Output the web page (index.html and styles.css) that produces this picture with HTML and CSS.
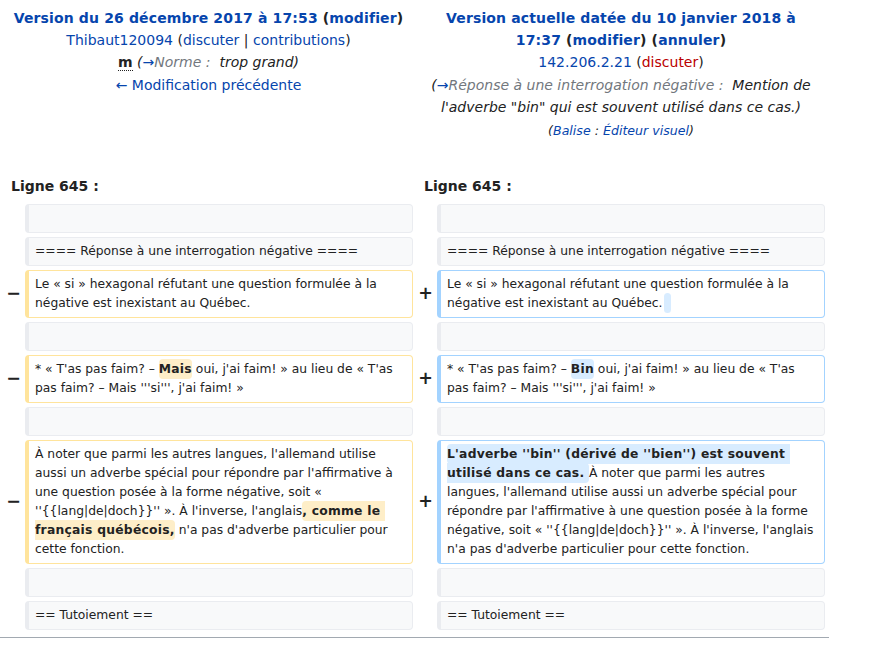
FILE: index.html
```html
<!DOCTYPE html>
<html lang="fr">
<head>
<meta charset="utf-8">
<title>Différences entre les versions</title>
<link rel="stylesheet" href="styles.css">
</head>
<body>
<div class="page">
<table class="diff">
  <colgroup>
    <col class="c-mark1"><col class="c-content"><col class="c-mark2"><col class="c-content">
  </colgroup>
  <tbody>
    <tr class="diff-title">
      <td colspan="2" class="diff-otitle">
        <div><strong><a class="lnk" href="#">Version du 26 décembre 2017 à 17:53</a> <span class="paren">(<a class="lnk" href="#">modifier</a>)</span></strong></div>
        <div><a class="lnk" href="#">Thibaut120094</a> <span class="paren">(<a class="lnk" href="#">discuter</a> | <a class="lnk" href="#">contributions</a>)</span></div>
        <div><abbr class="minoredit">m</abbr> <span class="comment">(<a class="lnk" href="#">→</a><span class="autocomment">Norme&nbsp;:&nbsp;</span> trop grand)</span></div>
        <div><a class="lnk" href="#">← Modification précédente</a></div>
      </td>
      <td colspan="2" class="diff-ntitle">
        <div><strong><a class="lnk" href="#">Version actuelle datée du 10 janvier 2018 à 17:37</a> <span class="paren">(<a class="lnk" href="#">modifier</a>)</span> <span class="paren">(<a class="lnk" href="#">annuler</a>)</span></strong></div>
        <div><a class="lnk" href="#">142.206.2.21</a> <span class="paren">(<a class="newlnk" href="#">discuter</a>)</span></div>
        <div><span class="comment">(<a class="lnk" href="#">→</a><span class="autocomment">Réponse à une interrogation négative&nbsp;:&nbsp;</span> Mention de l'adverbe "bin" qui est souvent utilisé dans ce cas.)</span></div>
        <div><span class="tags">(<a class="lnk" href="#">Balise</a> : <a class="lnk" href="#">Éditeur visuel</a>)</span></div>
      </td>
    </tr>
    <tr>
      <td colspan="2" class="diff-lineno">Ligne 645 :</td>
      <td colspan="2" class="diff-lineno">Ligne 645 :</td>
    </tr>
    <tr>
      <td class="diff-marker"></td><td class="diff-context"><div><br></div></td>
      <td class="diff-marker"></td><td class="diff-context"><div><br></div></td>
    </tr>
    <tr>
      <td class="diff-marker"></td><td class="diff-context"><div>==== Réponse à une interrogation négative ====</div></td>
      <td class="diff-marker"></td><td class="diff-context"><div>==== Réponse à une interrogation négative ====</div></td>
    </tr>
    <tr>
      <td class="diff-marker">−</td><td class="diff-deletedline"><div>Le « si » hexagonal réfutant une question formulée à la négative est inexistant au Québec.</div></td>
      <td class="diff-marker">+</td><td class="diff-addedline"><div>Le « si » hexagonal réfutant une question formulée à la négative est inexistant au Québec.<ins class="diffchange diffchange-space">&nbsp;</ins></div></td>
    </tr>
    <tr>
      <td class="diff-marker"></td><td class="diff-context"><div><br></div></td>
      <td class="diff-marker"></td><td class="diff-context"><div><br></div></td>
    </tr>
    <tr>
      <td class="diff-marker">−</td><td class="diff-deletedline"><div>* « T'as pas faim? – <del class="diffchange">Mais</del> oui, j'ai faim! » au lieu de « T'as pas faim? – Mais '''si''', j'ai faim! »</div></td>
      <td class="diff-marker">+</td><td class="diff-addedline"><div>* « T'as pas faim? – <ins class="diffchange">Bin</ins> oui, j'ai faim! » au lieu de « T'as pas faim? – Mais '''si''', j'ai faim! »</div></td>
    </tr>
    <tr>
      <td class="diff-marker"></td><td class="diff-context"><div><br></div></td>
      <td class="diff-marker"></td><td class="diff-context"><div><br></div></td>
    </tr>
    <tr>
      <td class="diff-marker">−</td><td class="diff-deletedline"><div>À noter que parmi les autres langues, l'allemand utilise aussi un adverbe spécial pour répondre par l'affirmative à une question posée à la forme négative, soit « ''{{lang|de|doch}}'' ». À l'inverse, l'anglais<del class="diffchange">, comme le français québécois,</del> n'a pas d'adverbe particulier pour cette fonction.</div></td>
      <td class="diff-marker">+</td><td class="diff-addedline"><div><ins class="diffchange">L'adverbe ''bin'' (dérivé de ''bien'') est souvent utilisé dans ce cas. </ins>À noter que parmi les autres langues, l'allemand utilise aussi un adverbe spécial pour répondre par l'affirmative à une question posée à la forme négative, soit « ''{{lang|de|doch}}'' ». À l'inverse, l'anglais n'a pas d'adverbe particulier pour cette fonction.</div></td>
    </tr>
    <tr>
      <td class="diff-marker"></td><td class="diff-context"><div><br></div></td>
      <td class="diff-marker"></td><td class="diff-context"><div><br></div></td>
    </tr>
    <tr>
      <td class="diff-marker"></td><td class="diff-context"><div>== Tutoiement ==</div></td>
      <td class="diff-marker"></td><td class="diff-context"><div>== Tutoiement ==</div></td>
    </tr>
  </tbody>
</table>
<div class="rule"></div>
</div>
</body>
</html>
```

FILE: styles.css
```css
html, body {
  margin: 0;
  padding: 0;
  background: #ffffff;
}
body {
  font-family: "DejaVu Sans", sans-serif;
  font-size: 14px;
  line-height: 1.6;
  color: #222222;
}
.page {
  width: 829px;
}
table.diff {
  width: 829px;
  table-layout: fixed;
  border-collapse: separate;
  border-spacing: 4px;
  margin: 0;
}
col.c-mark1 { width: 17px; }
col.c-mark2 { width: 16px; }
col.c-content { width: 388px; }

.diff td {
  padding: 4.6px 7px;
}
.diff td.diff-otitle,
.diff td.diff-ntitle {
  text-align: center;
  vertical-align: top;
  padding: 2.6px 7px 4.6px;
}
.lnk {
  color: #0645ad;
  text-decoration: none;
}
.newlnk {
  color: #ba0000;
  text-decoration: none;
}
.paren { color: #222222; }
strong {
  font-weight: bold;
  letter-spacing: 0.14px;
}
.minoredit {
  font-weight: bold;
  text-decoration: none;
  border-bottom: 1px dotted #222222;
}
.comment {
  font-style: italic;
}
.autocomment {
  color: #72777d;
}
.tags {
  font-style: italic;
  font-size: 90%;
}

.diff td.diff-lineno {
  font-weight: bold;
  padding: 25px 7px 2.6px;
  text-align: left;
}

.diff td.diff-marker {
  text-align: right;
  font-weight: bold;
  font-size: 17.5px;
  line-height: 1.2;
  padding: 0;
  vertical-align: middle;
}

.diff td.diff-context,
.diff td.diff-deletedline,
.diff td.diff-addedline {
  font-size: 12.32px;
  line-height: 19px;
  vertical-align: top;
  white-space: pre-wrap;
  word-wrap: break-word;
  border-style: solid;
  border-width: 1px 1px 1px 4px;
  border-radius: 4px;
  padding: 4px 6px 4px 6px;
}
.diff td.diff-context {
  background: #f8f9fa;
  border-color: #eaecf0;
  color: #222222;
}
.diff td.diff-deletedline {
  border-color: #ffe49c;
}
.diff td.diff-addedline {
  border-color: #a3d3ff;
}
.diffchange {
  font-weight: bold;
  text-decoration: none;
  letter-spacing: 0.25px;
  border-radius: 4px;
  padding: 3px 0;
}
.diffchange-space {
  padding: 3px 1.5px;
  margin-left: 1px;
}
.diff-deletedline .diffchange {
  background: #feeec8;
}
.diff-addedline .diffchange {
  background: #d8ecff;
}
.rule {
  border-top: 1px solid #a2a9b1;
  margin-top: 3px;
  width: 829px;
}
```
